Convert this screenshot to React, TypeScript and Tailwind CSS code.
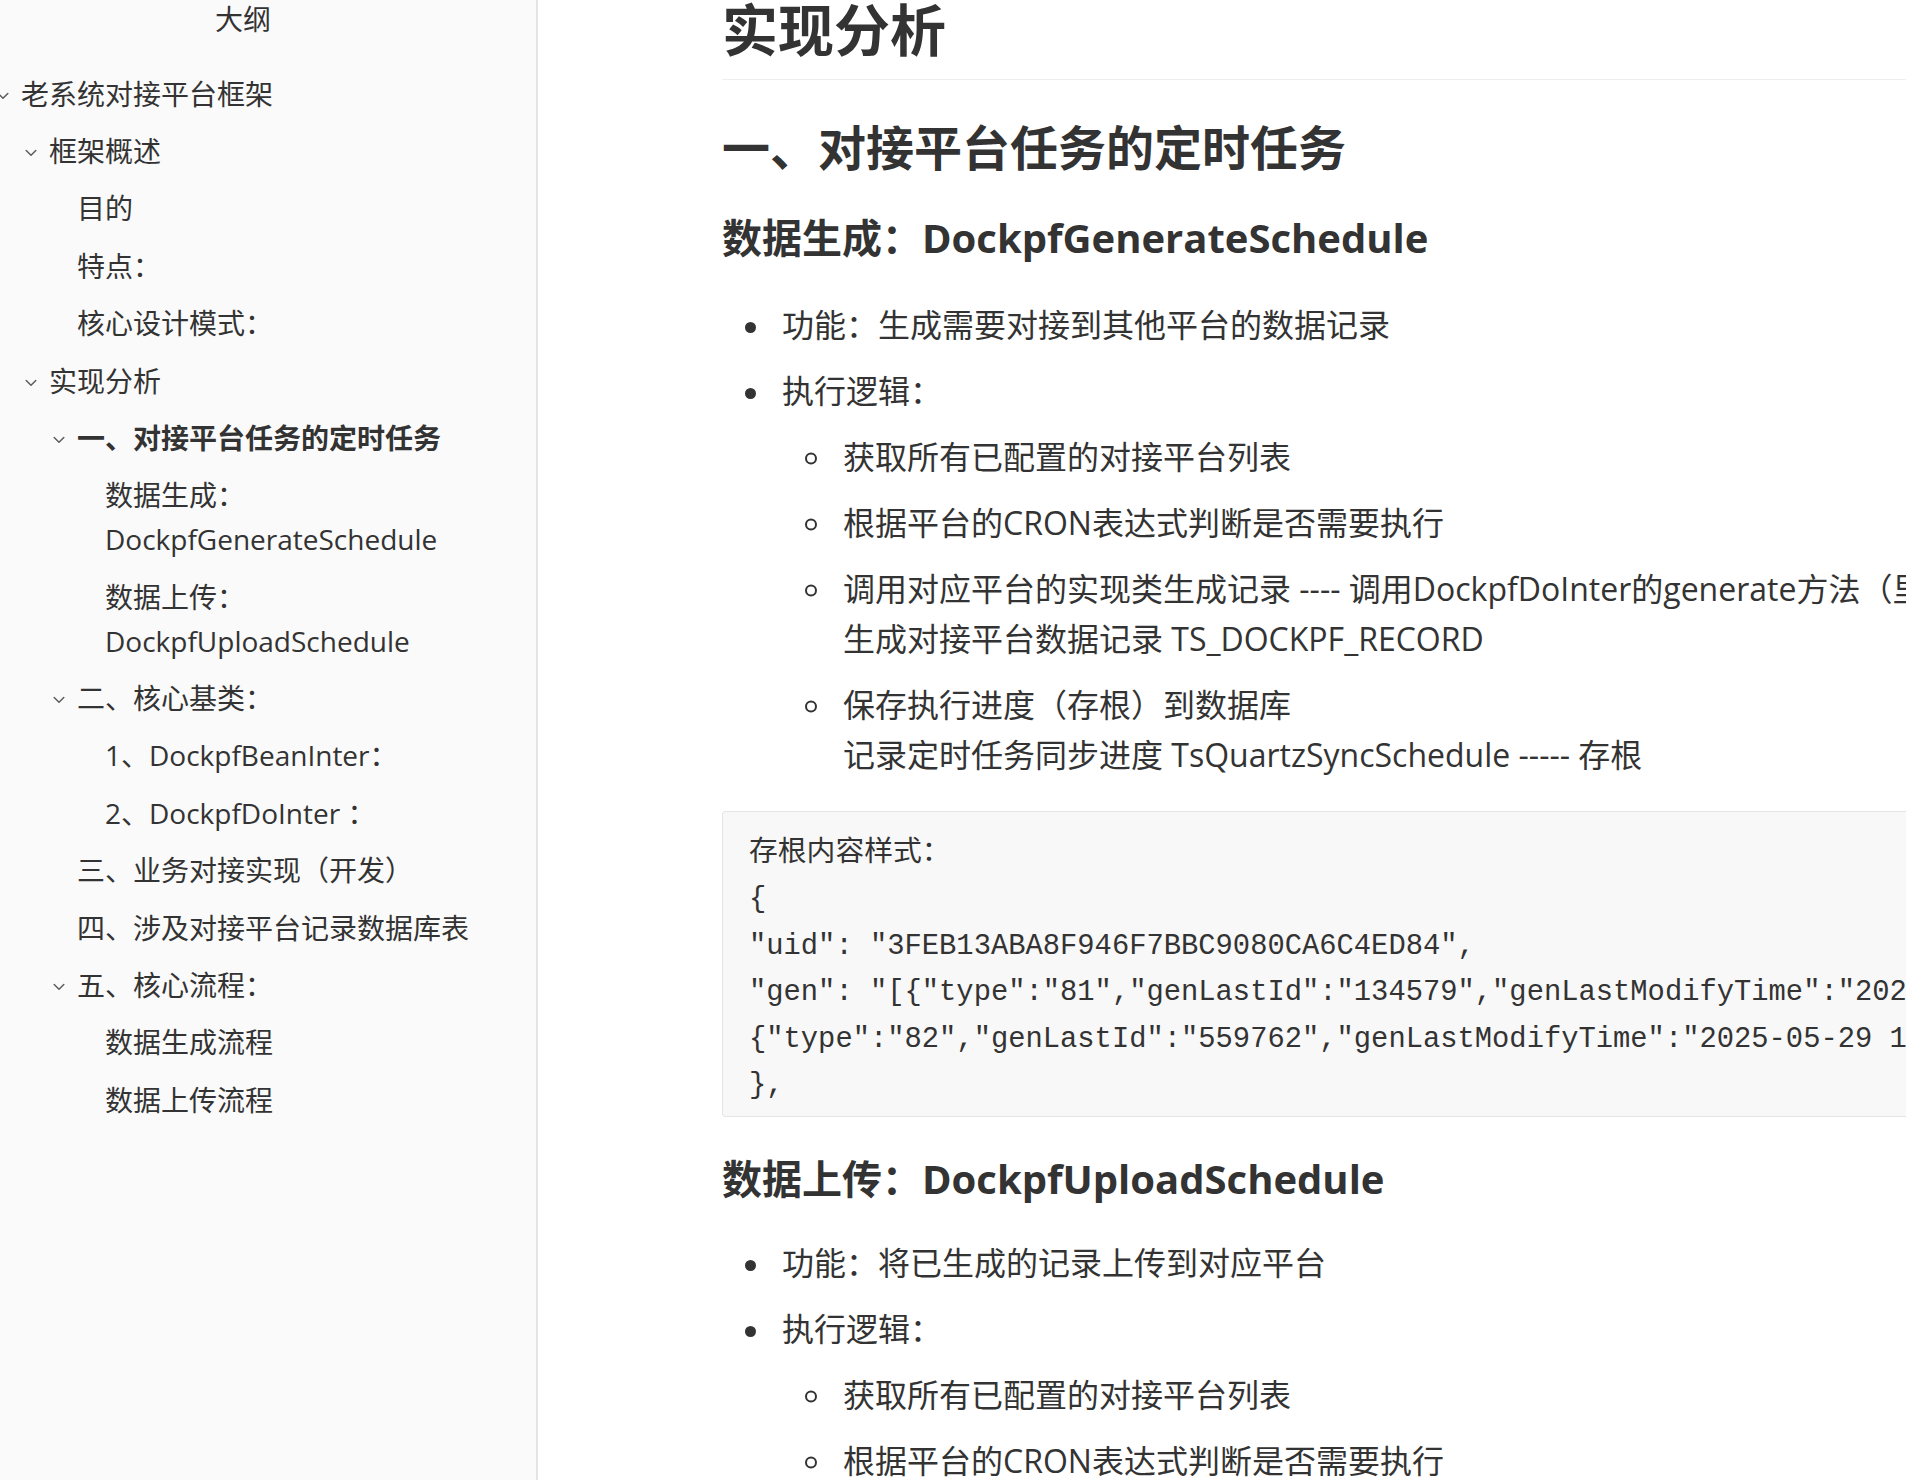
import React from 'react';

type OutlineItem = {
  level: 0 | 1 | 2 | 3;
  lines: string[];
  open?: boolean;
  active?: boolean;
};

const outline: OutlineItem[] = [
  { level: 0, lines: ['老系统对接平台框架'], open: true },
  { level: 1, lines: ['框架概述'], open: true },
  { level: 2, lines: ['目的'] },
  { level: 2, lines: ['特点：'] },
  { level: 2, lines: ['核心设计模式：'] },
  { level: 1, lines: ['实现分析'], open: true },
  { level: 2, lines: ['一、对接平台任务的定时任务'], open: true, active: true },
  { level: 3, lines: ['数据生成：', 'DockpfGenerateSchedule'] },
  { level: 3, lines: ['数据上传：', 'DockpfUploadSchedule'] },
  { level: 2, lines: ['二、核心基类：'], open: true },
  { level: 3, lines: ['1、DockpfBeanInter：'] },
  { level: 3, lines: ['2、DockpfDoInter ：'] },
  { level: 2, lines: ['三、业务对接实现（开发）'] },
  { level: 2, lines: ['四、涉及对接平台记录数据库表'] },
  { level: 2, lines: ['五、核心流程：'], open: true },
  { level: 3, lines: ['数据生成流程'] },
  { level: 3, lines: ['数据上传流程'] },
];

const indent = {
  0: 'pl-0',
  1: 'pl-[28px]',
  2: 'pl-[56px]',
  3: 'pl-[84px]',
};

const Chevron = () => (
  <svg width="12" height="8" viewBox="0 0 12 8" className="mt-[4px]">
    <path d="M1.2 1.5 L6 6.2 L10.8 1.5" fill="none" stroke="#5c5c5c" strokeWidth="1.5" strokeLinecap="round" strokeLinejoin="round" />
  </svg>
);

const Sidebar = () => (
  <aside className="w-[538px] shrink-0 h-full overflow-hidden bg-[#fafafa] border-r-2 border-[#e4e4e4] text-[#333] text-[28px] font-['Open_Sans','Noto_Sans_CJK_SC',sans-serif]">
    <div className="pr-[50px] text-center leading-[38px]">大纲</div>
    <div className="mt-[27px] ml-[-3px]">
      {outline.map((item, i) => (
        <div key={i} className={`flex py-[6.7px] ${indent[item.level]}`}>
          <div className="w-[24px] h-[44px] shrink-0 flex items-center">
            {item.open && <Chevron />}
          </div>
          <div className={`leading-[44px] whitespace-nowrap ${item.active ? 'font-bold' : ''}`}>
            {item.lines.map((l, j) => (
              <div key={j}>{l}</div>
            ))}
          </div>
        </div>
      ))}
    </div>
  </aside>
);

const Disc = ({ children, first }: { children: React.ReactNode; first?: boolean }) => (
  <li className={`flex ${first ? '' : 'mt-[16px]'}`}>
    <div className="w-[60px] h-[50px] shrink-0 flex items-center pl-[22.5px]">
      <span className="block w-[11px] h-[11px] rounded-full bg-[#333] translate-y-[2px]" />
    </div>
    <div className="min-w-0">{children}</div>
  </li>
);

const Circle = ({ children, first }: { children: React.ReactNode; first?: boolean }) => (
  <li className={`flex ${first ? '' : 'mt-[16px]'}`}>
    <div className="w-[61px] h-[50px] shrink-0 flex items-center pl-[23px]">
      <span className="block w-[12px] h-[12px] rounded-full border-2 border-[#333] translate-y-[1.5px]" />
    </div>
    <div className="min-w-0 whitespace-nowrap">{children}</div>
  </li>
);

const codeLines = [
  '存根内容样式：',
  '{',
  '"uid": "3FEB13ABA8F946F7BBC9080CA6C4ED84",',
  '"gen": "[{"type":"81","genLastId":"134579","genLastModifyTime":"2025-05-29 10:21:36"},',
  '{"type":"82","genLastId":"559762","genLastModifyTime":"2025-05-29 10:21:36"}]"',
  '},',
];

export default function App() {
  return (
    <div className="flex w-[1906px] h-[1480px] overflow-hidden bg-white">
      <Sidebar />
      <main className="flex-1 min-w-0 h-full overflow-hidden bg-white">
        <div className="w-[1700px] pl-[184px] text-[#333] font-['Open_Sans','Noto_Sans_CJK_SC',sans-serif]">
          <h1 className="mt-[-4px] text-[56px] leading-[67px] font-bold pb-[16px] border-b border-[#eeeeee]">
            实现分析
          </h1>

          <h2 className="mt-[38.5px] text-[48px] leading-[58px] font-bold">一、对接平台任务的定时任务</h2>

          <h3 className="mt-[35px] text-[40px] leading-[52px] font-bold">数据生成：DockpfGenerateSchedule</h3>

          <ul className="mt-[36.5px] text-[32px] leading-[50px]">
            <Disc first>功能：生成需要对接到其他平台的数据记录</Disc>
            <Disc>
              执行逻辑：
              <ul className="mt-[16px]">
                <Circle first>获取所有已配置的对接平台列表</Circle>
                <Circle>根据平台的CRON表达式判断是否需要执行</Circle>
                <Circle>
                  调用对应平台的实现类生成记录 ---- 调用DockpfDoInter的generate方法（里面由各平台实现具体逻辑）
                  <br />
                  生成对接平台数据记录 TS_DOCKPF_RECORD
                </Circle>
                <Circle>
                  保存执行进度（存根）到数据库
                  <br />
                  记录定时任务同步进度 TsQuartzSyncSchedule ----- 存根
                </Circle>
              </ul>
            </Disc>
          </ul>

          <div className="mt-[31px] rounded-[3px] border border-[#e5e5e5] bg-[#f8f8f8] pl-[26px] pt-[19px] pb-[6.8px] text-[28.8px] leading-[46.4px] whitespace-pre font-['Liberation_Mono','Noto_Sans_CJK_SC',monospace]">
            {codeLines.map((l, i) => (
              <div key={i}>{l}</div>
            ))}
          </div>

          <h3 className="mt-[36px] text-[40px] leading-[52px] font-bold">数据上传：DockpfUploadSchedule</h3>

          <ul className="mt-[33px] text-[32px] leading-[50px]">
            <Disc first>功能：将已生成的记录上传到对应平台</Disc>
            <Disc>
              执行逻辑：
              <ul className="mt-[16px]">
                <Circle first>获取所有已配置的对接平台列表</Circle>
                <Circle>根据平台的CRON表达式判断是否需要执行</Circle>
                <Circle>调用对应平台的实现类上传记录</Circle>
              </ul>
            </Disc>
          </ul>
        </div>
      </main>
    </div>
  );
}
